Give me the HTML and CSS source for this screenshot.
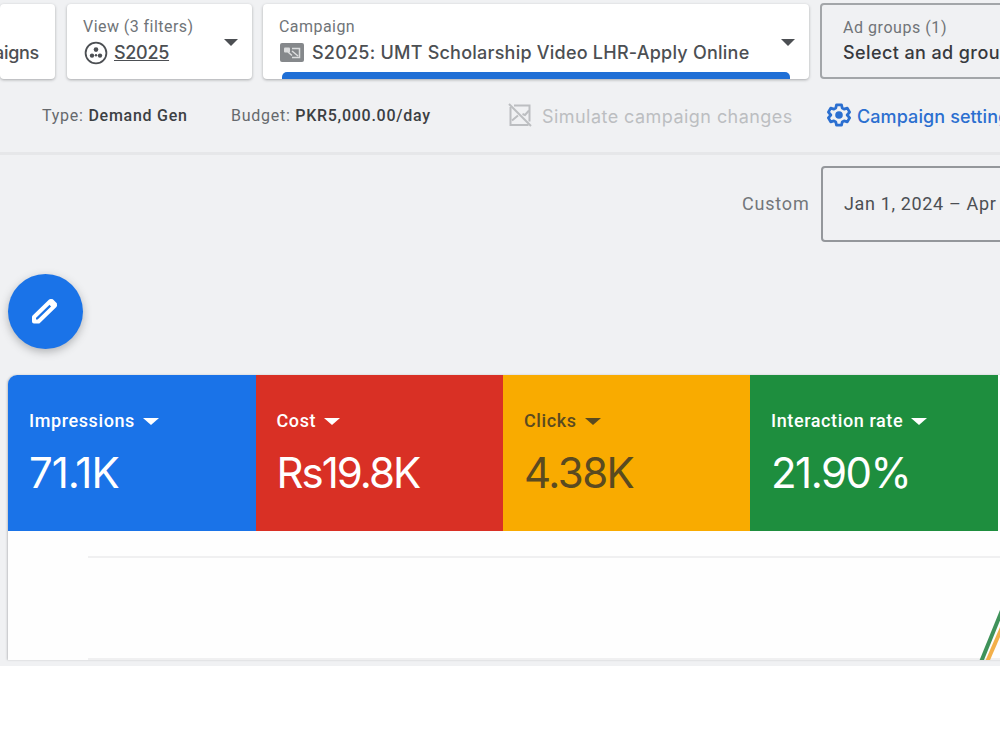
FILE: index.html
```
<!DOCTYPE html>
<html lang="en">
<head>
  <meta charset="UTF-8" />
  <title>Campaign overview</title>
  <link rel="stylesheet" href="styles.css">
</head>
<body>

<div class="app">
  <header class="scope-bar">
    <div class="scope-card scope-campaigns">
      <div class="scope-value">aigns</div>
    </div>

    <div class="scope-card scope-view">
      <div class="scope-label">View (3 filters)</div>
      <div class="scope-value">
        <svg class="view-icon" viewBox="0 0 24 24">
          <circle cx="12" cy="12" r="10.4" fill="none" stroke="currentColor" stroke-width="1.8"/>
          <circle cx="12" cy="8.6" r="2.3" fill="currentColor"/>
          <circle cx="8" cy="14.6" r="2.2" fill="currentColor"/>
          <circle cx="16" cy="14.6" r="2.2" fill="currentColor"/>
          <circle cx="12" cy="14.2" r="1.2" fill="currentColor"/>
        </svg>
        <span class="view-name">S2025</span>
      </div>
      <span class="arrow"></span>
    </div>

    <div class="scope-card scope-campaign">
      <div class="scope-label">Campaign</div>
      <div class="scope-value">
        <svg class="campaign-icon" viewBox="0 0 24 19">
          <rect x="0" y="0" width="24" height="19" rx="2" fill="#85888b"/>
          <rect x="4" y="4.5" width="6" height="5" rx="1" fill="#dcddde"/>
          <path d="M12 5.500h7.500v9H12M8 9l4 3.500M12 8l6 5" fill="none" stroke="#dcddde" stroke-width="1.5"/>
        </svg>
        <span class="campaign-name">S2025: UMT Scholarship Video LHR-Apply Online</span>
      </div>
      <span class="arrow"></span>
      <div class="active-bar"></div>
    </div>

    <div class="scope-card scope-adgroup">
      <div class="scope-label">Ad groups (1)</div>
      <div class="scope-value">Select an ad group</div>
    </div>
  </header>

  <div class="info-bar">
    <div class="info info-type">Type: <b>Demand Gen</b></div>
    <div class="info info-budget">Budget: <b>PKR5,000.00/day</b></div>
    <div class="simulate">
      <svg class="simulate-icon" viewBox="0 0 24 24" fill="none" stroke="currentColor" stroke-width="2">
        <path d="M6 2.500h15.500v16M2.500 4v18h18"/>
        <path d="M1 1l22 22"/>
        <path d="M4 17.500l6-5M14.500 11l2.500 1 4-4.500"/>
      </svg>
      <span>Simulate campaign changes</span>
    </div>
    <div class="settings">
      <svg class="settings-icon" viewBox="0 0 24 24" fill="none" stroke="currentColor">
        <path stroke-width="2.800" stroke-linejoin="round" d="M9.500 1.800h5l.7 3.200 1.900 1.100 3.200-1 2.300 4-2.400 2.900 2.400 2.900-2.300 4-3.200-1-1.900 1.100-.7 3.200h-5l-.7-3.200-1.900-1.100-3.200 1-2.300-4L3.800 12 1.400 9.100l2.300-4 3.200 1L8.800 5z"/>
        <circle cx="12" cy="12" r="3.800" fill="currentColor" stroke="none"/>
      </svg>
      <span>Campaign settings</span>
    </div>
  </div>

  <div class="date-row">
    <span class="date-label">Custom</span>
    <div class="date-box">Jan 1, 2024 – Apr</div>
  </div>

  <div class="edit-row">
    <div class="edit-button">
      <svg class="edit-icon" viewBox="0 0 28 28">
        <path d="M3 24.500v-4.500L19.500 4l4.500 4.500L7.500 24.500z" fill="none" stroke="#fff" stroke-width="4" stroke-linejoin="round"/>
        <path d="M18.500 5.500L21 3.500l3.500 3.500-2.500 2.500z" fill="#fff" stroke="#fff" stroke-width="3" stroke-linejoin="round"/>
      </svg>
    </div>
  </div>

  <section class="chart-card">
    <div class="metrics">
      <div class="metric blue">
        <div class="metric-label">Impressions <span class="arrow"></span></div>
        <div class="metric-value value-impressions">71.1K</div>
      </div>
      <div class="metric red">
        <div class="metric-label">Cost <span class="arrow"></span></div>
        <div class="metric-value value-cost">Rs19.8K</div>
      </div>
      <div class="metric yellow">
        <div class="metric-label">Clicks <span class="arrow"></span></div>
        <div class="metric-value value-clicks">4.38K</div>
      </div>
      <div class="metric green">
        <div class="metric-label">Interaction rate <span class="arrow"></span></div>
        <div class="metric-value value-rate">21.90%</div>
      </div>
    </div>
    <svg class="chart" viewBox="0 0 992 129">
      <path d="M80 26h912M80 128h912" stroke="#f0f0f1" stroke-width="2"/>
      <path d="M979 131l20-46" stroke="#f3b04a" stroke-width="4"/>
      <path d="M973 131l24-59" stroke="#3f925a" stroke-width="4"/>
    </svg>
  </section>
</div>

</body>
</html>
```
FILE: styles.css
```
* {
  box-sizing: border-box;
}
body {
  margin: 0;
  background: #fff;
  font-family: Roboto, "Liberation Sans", sans-serif;
  color: #4c4f53;
  overflow: hidden;
}
.app {
  width: 1000px;
  height: 666px;
  background: #f0f1f3;
  overflow: hidden;
  white-space: nowrap;
}
.arrow {
  display: inline-block;
  border-left: 7px solid transparent;
  border-right: 7px solid transparent;
  border-top: 7px solid currentColor;
}

/* Scope selector */
.scope-bar {
  display: flex;
  height: 80px;
  padding-top: 4px;
}
.scope-card {
  position: relative;
  flex: none;
  height: 75px;
  padding: 13px 0 0 16px;
  background: #fff;
  border-radius: 4px;
  box-shadow: 0 1px 3px rgba(60,64,67,0.4);
}
.scope-card .arrow {
  position: absolute;
  right: 14px;
  top: 35px;
}
.scope-label {
  height: 20px;
  line-height: 20px;
  font-size: 16px;
  color: #707478;
  letter-spacing: 0.45px;
}
.scope-value {
  display: flex;
  align-items: center;
  height: 31px;
  font-family: Inter, Roboto, sans-serif;
  font-size: 18px;
  font-weight: 500;
  letter-spacing: -0.3px;
}
.scope-campaigns {
  display: flex;
  justify-content: flex-end;
  width: 55px;
  margin-right: 12px;
  padding: 33px 16px 0 0;
}
.scope-view {
  width: 185px;
  margin-right: 11px;
}
.view-icon {
  width: 24px;
  height: 24px;
  margin: 0 6px 0 1px;
}
.view-name {
  text-decoration: underline;
}
.scope-campaign {
  width: 546px;
  margin-right: 11px;
}
.campaign-icon {
  width: 24px;
  height: 19px;
  margin: 0 8px 0 1px;
}
.campaign-name {
  letter-spacing: 0.23px;
}
.active-bar {
  position: absolute;
  left: 19px;
  right: 19px;
  bottom: 0;
  height: 7px;
  background: #1f6fd6;
  border-radius: 5px 5px 0 0;
}
.scope-adgroup {
  width: 200px;
  height: 76px;
  margin-top: -1px;
  background: #f0f1f3;
  border: 2px solid #a3a6a9;
  box-shadow: none;
  padding: 13px 0 0 21px;
  color: #37393d;
}
.scope-adgroup .scope-label {
  letter-spacing: 0.55px;
}
.scope-adgroup .scope-value {
  height: 29px;
  letter-spacing: 0.4px;
}

/* Type, budget and campaign links */
.info-bar {
  display: flex;
  align-items: center;
  height: 75px;
  padding: 0 0 2px 42px;
  border-bottom: 3px solid #e6e7e9;
}
.info {
  flex: none;
  font-size: 16px;
  color: #66696d;
}
.info b {
  font-weight: 500;
  color: #3c3f43;
}
.info-type {
  width: 189px;
  letter-spacing: 0.75px;
}
.info-budget {
  width: 277px;
  letter-spacing: 0.73px;
}
.simulate,
.settings {
  display: flex;
  flex: none;
  align-items: center;
  font-family: Inter, Roboto, sans-serif;
  font-size: 18px;
  letter-spacing: 0.45px;
}
.simulate {
  width: 319px;
  color: #bcbec1;
}
.simulate-icon {
  width: 24px;
  height: 24px;
  margin-right: 10px;
}
.settings {
  color: #2b6fd0;
  font-weight: 500;
  letter-spacing: 0.1px;
}
.settings-icon {
  width: 24px;
  height: 24px;
  margin-right: 6px;
}
.simulate span,
.settings span {
  padding-top: 2px;
}

.date-row {
  display: flex;
  align-items: center;
  padding: 11px 0 0 742px;
  font-size: 18px;
}
.date-label {
  flex: none;
  width: 79px;
  padding-bottom: 2px;
  color: #73767a;
  letter-spacing: 0.8px;
}
.date-box {
  flex: none;
  width: 300px;
  height: 76px;
  line-height: 71px;
  padding-left: 21px;
  border: 2px solid #94979b;
  border-radius: 4px;
  letter-spacing: 0.65px;
}

.edit-row {
  height: 133px;
  padding: 32px 0 0 8px;
}
.edit-button {
  display: flex;
  align-items: center;
  justify-content: center;
  width: 75px;
  height: 75px;
  padding: 0 2px 2px 0;
  border-radius: 50%;
  background: #1a73e8;
  box-shadow: 0 3px 8px rgba(60,64,67,0.35);
}
.edit-icon {
  width: 28px;
  height: 28px;
}

/* Metrics and chart */
.chart-card {
  width: 1000px;
  height: 285px;
  margin-left: 8px;
  background: #fefefe;
  border-radius: 9px 0 0 0;
  overflow: hidden;
  box-shadow: -1px 0 2px rgba(60,64,67,0.25);
}
.metrics {
  display: grid;
  grid-template-columns: 247.500px 247.500px 247px 248px;
  height: 156px;
}
.metric {
  padding: 33px 0 0 21px;
  color: #fff;
}
.metric-label {
  display: flex;
  align-items: center;
  gap: 8px;
  height: 24px;
  font-size: 18px;
  font-weight: 500;
  letter-spacing: 0.6px;
}
.metric-label .arrow {
  margin-top: 2px;
  border-left-width: 8px;
  border-right-width: 8px;
}
.metric-value {
  height: 54px;
  margin-top: 14px;
  line-height: 54px;
  font-family: Inter, Roboto, sans-serif;
  font-size: 42px;
}
.blue {
  background: #1a73e8;
}
.red {
  background: #d93025;
}
.yellow {
  background: #f9ab00;
  color: #5a4a20;
}
.green {
  background: #1e8e3e;
}
.value-impressions {
  letter-spacing: -1px;
}
.value-cost {
  letter-spacing: -2px;
}
.value-clicks {
  letter-spacing: -1.500px;
}
.value-rate {
  letter-spacing: -1.500px;
}
.chart {
  display: block;
  width: 992px;
  height: 129px;
}
```
